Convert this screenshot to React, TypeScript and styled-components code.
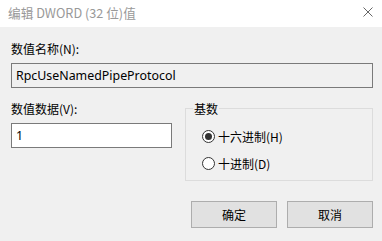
import React from 'react';
import styled, { createGlobalStyle } from 'styled-components';

const GlobalStyle = createGlobalStyle`
  html, body {
    margin: 0;
    padding: 0;
    background: #f0f0f0;
  }
  body {
    font-family: 'Segoe UI', 'Noto Sans', 'Noto Sans CJK SC', sans-serif;
    font-size: 12px;
    color: #000;
  }
`;

const Window = styled.div`
  width: 382px;
  height: 241px;
  background: #f0f0f0;
  display: flex;
  flex-direction: column;
  overflow: hidden;
`;

const TitleBar = styled.div`
  height: 27px;
  background: #fff;
  display: flex;
  align-items: center;
  justify-content: space-between;
  padding: 0 9px 2px 8px;
  box-sizing: border-box;
`;

const Title = styled.span`
  color: #999;
  font-size: 12.7px;
  font-family: 'Segoe UI', 'Noto Sans CJK SC', sans-serif;
`;

const CloseButton = styled.span`
  width: 10px;
  height: 10px;
  display: flex;
  margin-top: -1px;
`;

const Content = styled.div`
  padding: 13px 9px 0 11px;
  display: flex;
  flex-direction: column;
`;

const Label = styled.div`
  line-height: 17px;
  height: 17px;
  font-family: 'Noto Sans CJK SC', sans-serif;
  font-size: 12px;
`;

const Field = styled.div<{ readOnly?: boolean }>`
  height: 25px;
  box-sizing: border-box;
  border: 1px solid #7a7a7a;
  background: ${(p) => (p.readOnly ? '#f0f0f0' : '#fff')};
  padding: 0 4px;
  display: flex;
  align-items: center;
  font-family: 'Segoe UI', 'Noto Sans', sans-serif;
  font-size: 12.4px;
  margin-top: 6px;
`;

const Lower = styled.div`
  display: grid;
  grid-template-columns: 161px 188px;
  column-gap: 13px;
  margin-top: 12px;
`;

const Column = styled.div`
  display: flex;
  flex-direction: column;
`;

const Group = styled.fieldset`
  margin: 0;
  padding: 11px 0 10px 16px;
  border: 1px solid #dcdcdc;
  height: 81px;
  box-sizing: border-box;
  display: flex;
  flex-direction: column;
  gap: 10px;
`;

const Legend = styled.legend`
  padding: 0 1px;
  margin-left: -9px;
  font-family: 'Noto Sans CJK SC', sans-serif;
  font-size: 12px;
  line-height: 17px;
`;

const RadioRow = styled.div`
  display: flex;
  align-items: center;
  gap: 3px;
  height: 19px;
  font-family: 'Noto Sans CJK SC', sans-serif;
`;

const RadioCircle = styled.span<{ checked?: boolean }>`
  width: 13px;
  height: 13px;
  box-sizing: border-box;
  border: 1px solid #333;
  border-radius: 50%;
  background: #fff;
  display: flex;
  align-items: center;
  justify-content: center;

  &::after {
    content: '';
    width: 7px;
    height: 7px;
    border-radius: 50%;
    background: #333;
    display: ${(p) => (p.checked ? 'block' : 'none')};
  }
`;

const Buttons = styled.div`
  display: flex;
  justify-content: flex-end;
  gap: 10px;
  margin-top: 20px;
`;

const Button = styled.div`
  width: 86px;
  height: 27px;
  box-sizing: border-box;
  border: 1px solid #adadad;
  background: #e1e1e1;
  display: flex;
  align-items: center;
  justify-content: center;
  font-family: 'Noto Sans CJK SC', sans-serif;
  font-size: 12px;
`;

export default function App() {
  return (
    <>
      <GlobalStyle />
      <Window>
        <TitleBar>
          <Title>编辑 DWORD (32 位)值</Title>
          <CloseButton>
            <svg width="10" height="10" viewBox="0 0 10 10">
              <path d="M0.5 0.5 L9.5 9.5 M9.5 0.5 L0.5 9.5" stroke="#666" strokeWidth="1" />
            </svg>
          </CloseButton>
        </TitleBar>
        <Content>
          <Label>数值名称(N):</Label>
          <Field readOnly>RpcUseNamedPipeProtocol</Field>
          <Lower>
            <Column>
              <Label>数值数据(V):</Label>
              <Field>1</Field>
            </Column>
            <Group>
              <Legend>基数</Legend>
              <RadioRow>
                <RadioCircle checked />
                十六进制(H)
              </RadioRow>
              <RadioRow>
                <RadioCircle />
                十进制(D)
              </RadioRow>
            </Group>
          </Lower>
          <Buttons>
            <Button>确定</Button>
            <Button>取消</Button>
          </Buttons>
        </Content>
      </Window>
    </>
  );
}
